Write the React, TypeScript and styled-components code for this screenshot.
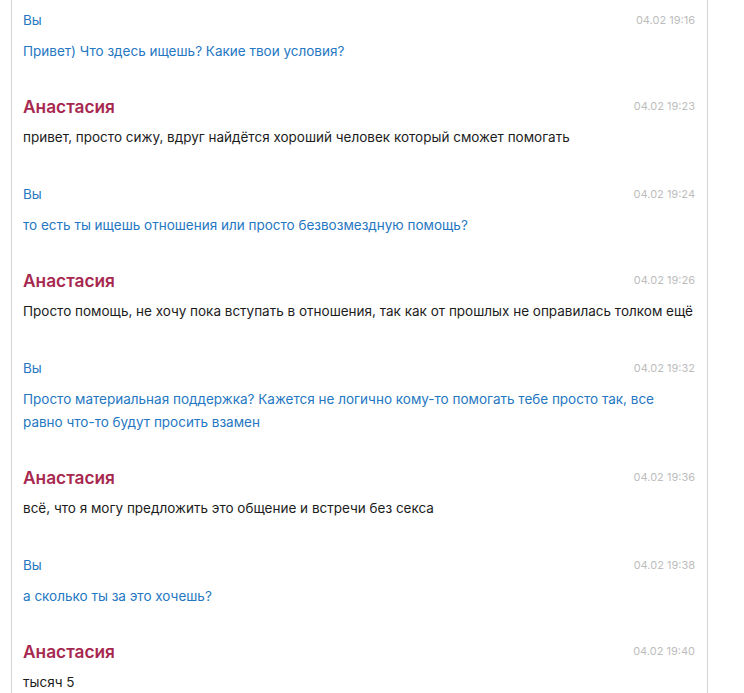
import React from "react";
import styled, { createGlobalStyle } from "styled-components";

const Global = createGlobalStyle`
  html, body { margin: 0; padding: 0; background: #fff; }
  body { font-family: Inter, "Noto Sans", sans-serif; }
`;

type Msg = { me: boolean; time: string; text: string };

const messages: Msg[] = [
  { me: true, time: "04.02 19:16", text: "Привет) Что здесь ищешь? Какие твои условия?" },
  { me: false, time: "04.02 19:23", text: "привет, просто сижу, вдруг найдётся хороший человек который сможет помогать" },
  { me: true, time: "04.02 19:24", text: "то есть ты ищешь отношения или просто безвозмездную помощь?" },
  { me: false, time: "04.02 19:26", text: "Просто помощь, не хочу пока вступать в отношения, так как от прошлых не оправилась толком ещё" },
  { me: true, time: "04.02 19:32", text: "Просто материальная поддержка? Кажется не логично кому-то помогать тебе просто так, все равно что-то будут просить взамен" },
  { me: false, time: "04.02 19:36", text: "всё, что я могу предложить это общение и встречи без секса" },
  { me: true, time: "04.02 19:38", text: "а сколько ты за это хочешь?" },
  { me: false, time: "04.02 19:40", text: "тысяч 5" },
];

const Thread = styled.div`
  margin-left: 11px;
  width: 695px;
  min-height: 693px;
  border-left: 1px solid #d4d4d4;
  border-right: 1px solid #d4d4d4;
`;

const Message = styled.div<{ $me: boolean }>`
  padding: 10px 12px ${(p) => (p.$me ? "23px" : "25px")} 11px;
`;

const Header = styled.div`
  display: flex;
  align-items: center;
  justify-content: space-between;
  height: 20px;
`;

const Author = styled.span<{ $me: boolean }>`
  font-size: ${(p) => (p.$me ? "13.5px" : "17.3px")};
  font-weight: ${(p) => (p.$me ? 400 : 600)};
  color: ${(p) => (p.$me ? "#2577c2" : "#a7284f")};
`;

const Time = styled.span`
  font-size: 11px;
  color: #bdbdbd;
`;

const Text = styled.div<{ $me: boolean }>`
  margin-top: 10px;
  font-size: 13.5px;
  line-height: 23px;
  color: ${(p) => (p.$me ? "#2577c2" : "#1c1c1c")};
`;

export default function App() {
  return (
    <>
      <Global />
      <Thread>
        {messages.map((m, i) => (
          <Message key={i} $me={m.me}>
            <Header>
              <Author $me={m.me}>{m.me ? "Вы" : "Анастасия"}</Author>
              <Time>{m.time}</Time>
            </Header>
            <Text $me={m.me}>{m.text}</Text>
          </Message>
        ))}
      </Thread>
    </>
  );
}
